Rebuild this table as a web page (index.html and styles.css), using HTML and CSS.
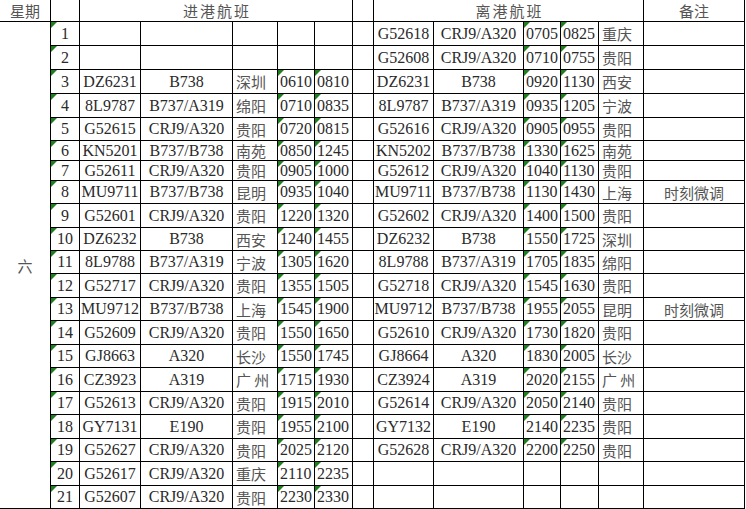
FILE: index.html
```html
<!DOCTYPE html>
<html lang="zh">
<head>
<meta charset="utf-8">
<title>航班时刻</title>
<link rel="stylesheet" href="styles.css">
</head>
<body>
<div class="sheet">
  <div class="cell c z">星期</div>
  <div class="cell"></div>
  <div class="cell c z span5 wide">进港航班</div>
  <div class="cell"></div>
  <div class="cell c z span5 wide">离港航班</div>
  <div class="cell c z">备注</div>

  <div class="cell c z day">六</div>

  <div class="cell n">1</div><div class="cell"></div><div class="cell"></div><div class="cell"></div><div class="cell"></div><div class="cell"></div><div class="cell"></div><div class="cell c">G52618</div><div class="cell c">CRJ9/A320</div><div class="cell t">0705</div><div class="cell t">0825</div><div class="cell l z">重庆</div><div class="cell"></div>
  <div class="cell n">2</div><div class="cell"></div><div class="cell"></div><div class="cell"></div><div class="cell"></div><div class="cell"></div><div class="cell"></div><div class="cell c">G52608</div><div class="cell c">CRJ9/A320</div><div class="cell t">0710</div><div class="cell t">0755</div><div class="cell l z">贵阳</div><div class="cell"></div>
  <div class="cell n">3</div><div class="cell c">DZ6231</div><div class="cell c">B738</div><div class="cell l z">深圳</div><div class="cell t">0610</div><div class="cell t">0810</div><div class="cell"></div><div class="cell c">DZ6231</div><div class="cell c">B738</div><div class="cell t">0920</div><div class="cell t">1130</div><div class="cell l z">西安</div><div class="cell"></div>
  <div class="cell n">4</div><div class="cell c">8L9787</div><div class="cell c">B737/A319</div><div class="cell l z">绵阳</div><div class="cell t">0710</div><div class="cell t">0835</div><div class="cell"></div><div class="cell c">8L9787</div><div class="cell c">B737/A319</div><div class="cell t">0935</div><div class="cell t">1205</div><div class="cell l z">宁波</div><div class="cell"></div>
  <div class="cell n">5</div><div class="cell c">G52615</div><div class="cell c">CRJ9/A320</div><div class="cell l z">贵阳</div><div class="cell t">0720</div><div class="cell t">0815</div><div class="cell"></div><div class="cell c">G52616</div><div class="cell c">CRJ9/A320</div><div class="cell t">0905</div><div class="cell t">0955</div><div class="cell l z">贵阳</div><div class="cell"></div>
  <div class="cell n">6</div><div class="cell c">KN5201</div><div class="cell c">B737/B738</div><div class="cell l z">南苑</div><div class="cell t">0850</div><div class="cell t">1245</div><div class="cell"></div><div class="cell c">KN5202</div><div class="cell c">B737/B738</div><div class="cell t">1330</div><div class="cell t">1625</div><div class="cell l z">南苑</div><div class="cell"></div>
  <div class="cell n">7</div><div class="cell c">G52611</div><div class="cell c">CRJ9/A320</div><div class="cell l z">贵阳</div><div class="cell t">0905</div><div class="cell t">1000</div><div class="cell"></div><div class="cell c">G52612</div><div class="cell c">CRJ9/A320</div><div class="cell t">1040</div><div class="cell t">1130</div><div class="cell l z">贵阳</div><div class="cell"></div>
  <div class="cell n">8</div><div class="cell c">MU9711</div><div class="cell c">B737/B738</div><div class="cell l z">昆明</div><div class="cell t">0935</div><div class="cell t">1040</div><div class="cell"></div><div class="cell c">MU9711</div><div class="cell c">B737/B738</div><div class="cell t">1130</div><div class="cell t">1430</div><div class="cell l z">上海</div><div class="cell c z">时刻微调</div>
  <div class="cell n">9</div><div class="cell c">G52601</div><div class="cell c">CRJ9/A320</div><div class="cell l z">贵阳</div><div class="cell t">1220</div><div class="cell t">1320</div><div class="cell"></div><div class="cell c">G52602</div><div class="cell c">CRJ9/A320</div><div class="cell t">1400</div><div class="cell t">1500</div><div class="cell l z">贵阳</div><div class="cell"></div>
  <div class="cell n">10</div><div class="cell c">DZ6232</div><div class="cell c">B738</div><div class="cell l z">西安</div><div class="cell t">1240</div><div class="cell t">1455</div><div class="cell"></div><div class="cell c">DZ6232</div><div class="cell c">B738</div><div class="cell t">1550</div><div class="cell t">1725</div><div class="cell l z">深圳</div><div class="cell"></div>
  <div class="cell n">11</div><div class="cell c">8L9788</div><div class="cell c">B737/A319</div><div class="cell l z">宁波</div><div class="cell t">1305</div><div class="cell t">1620</div><div class="cell"></div><div class="cell c">8L9788</div><div class="cell c">B737/A319</div><div class="cell t">1705</div><div class="cell t">1835</div><div class="cell l z">绵阳</div><div class="cell"></div>
  <div class="cell n">12</div><div class="cell c">G52717</div><div class="cell c">CRJ9/A320</div><div class="cell l z">贵阳</div><div class="cell t">1355</div><div class="cell t">1505</div><div class="cell"></div><div class="cell c">G52718</div><div class="cell c">CRJ9/A320</div><div class="cell t">1545</div><div class="cell t">1630</div><div class="cell l z">贵阳</div><div class="cell"></div>
  <div class="cell n">13</div><div class="cell c">MU9712</div><div class="cell c">B737/B738</div><div class="cell l z">上海</div><div class="cell t">1545</div><div class="cell t">1900</div><div class="cell"></div><div class="cell c">MU9712</div><div class="cell c">B737/B738</div><div class="cell t">1955</div><div class="cell t">2055</div><div class="cell l z">昆明</div><div class="cell c z">时刻微调</div>
  <div class="cell n">14</div><div class="cell c">G52609</div><div class="cell c">CRJ9/A320</div><div class="cell l z">贵阳</div><div class="cell t">1550</div><div class="cell t">1650</div><div class="cell"></div><div class="cell c">G52610</div><div class="cell c">CRJ9/A320</div><div class="cell t">1730</div><div class="cell t">1820</div><div class="cell l z">贵阳</div><div class="cell"></div>
  <div class="cell n">15</div><div class="cell c">GJ8663</div><div class="cell c">A320</div><div class="cell l z">长沙</div><div class="cell t">1550</div><div class="cell t">1745</div><div class="cell"></div><div class="cell c">GJ8664</div><div class="cell c">A320</div><div class="cell t">1830</div><div class="cell t">2005</div><div class="cell l z">长沙</div><div class="cell"></div>
  <div class="cell n">16</div><div class="cell c">CZ3923</div><div class="cell c">A319</div><div class="cell l z">广 州</div><div class="cell t">1715</div><div class="cell t">1930</div><div class="cell"></div><div class="cell c">CZ3924</div><div class="cell c">A319</div><div class="cell t">2020</div><div class="cell t">2155</div><div class="cell l z">广 州</div><div class="cell"></div>
  <div class="cell n">17</div><div class="cell c">G52613</div><div class="cell c">CRJ9/A320</div><div class="cell l z">贵阳</div><div class="cell t">1915</div><div class="cell t">2010</div><div class="cell"></div><div class="cell c">G52614</div><div class="cell c">CRJ9/A320</div><div class="cell t">2050</div><div class="cell t">2140</div><div class="cell l z">贵阳</div><div class="cell"></div>
  <div class="cell n">18</div><div class="cell c">GY7131</div><div class="cell c">E190</div><div class="cell l z">贵阳</div><div class="cell t">1955</div><div class="cell t">2100</div><div class="cell"></div><div class="cell c">GY7132</div><div class="cell c">E190</div><div class="cell t">2140</div><div class="cell t">2235</div><div class="cell l z">贵阳</div><div class="cell"></div>
  <div class="cell n">19</div><div class="cell c">G52627</div><div class="cell c">CRJ9/A320</div><div class="cell l z">贵阳</div><div class="cell t">2025</div><div class="cell t">2120</div><div class="cell"></div><div class="cell c">G52628</div><div class="cell c">CRJ9/A320</div><div class="cell t">2200</div><div class="cell t">2250</div><div class="cell l z">贵阳</div><div class="cell"></div>
  <div class="cell n">20</div><div class="cell c">G52617</div><div class="cell c">CRJ9/A320</div><div class="cell l z">重庆</div><div class="cell t">2110</div><div class="cell t">2235</div><div class="cell"></div><div class="cell"></div><div class="cell"></div><div class="cell"></div><div class="cell"></div><div class="cell"></div><div class="cell"></div>
  <div class="cell n">21</div><div class="cell c">G52607</div><div class="cell c">CRJ9/A320</div><div class="cell l z">贵阳</div><div class="cell t">2230</div><div class="cell t">2330</div><div class="cell"></div><div class="cell"></div><div class="cell"></div><div class="cell"></div><div class="cell"></div><div class="cell"></div><div class="cell"></div>
</div>
</body>
</html>
```
FILE: styles.css
```css
html, body {
  margin: 0;
  padding: 0;
  background: #ffffff;
}

.sheet {
  display: grid;
  grid-template-columns: 51px 29px 61px 92px 45px 37px 38px 21px 60px 90px 37px 38px 45px 101px;
  grid-template-rows: 22px 24px 24px 24px 24px 23px 20px 20px 23px 24px 23px 23px 24px 23px 24px 23px 24px 23px 24px 23px 24px 23px;
  width: 745px;
  font-family: "Liberation Serif", "Noto Sans CJK SC", serif;
  font-size: 16px;
  color: #2a2a2a;
}

.cell {
  box-sizing: border-box;
  border-right: 1px solid #000000;
  border-bottom: 1px solid #000000;
  display: flex;
  align-items: center;
  white-space: nowrap;
  overflow: hidden;
  position: relative;
  line-height: 1;
}

.c { justify-content: center; }
.l { justify-content: flex-start; padding-left: 3px; }
.z {
  font-family: "Noto Sans CJK SC", sans-serif;
  font-size: 15px;
  color: #555555;
}

.wide {
  letter-spacing: 2px;
  padding-left: 2px;
}

.span5 { grid-column: span 5; }
.day { grid-row: span 21; }

.n { justify-content: center; }
.t { justify-content: flex-start; padding-left: 2px; }

.n::before,
.t::before {
  content: "";
  position: absolute;
  left: 0;
  top: 0;
  width: 0;
  height: 0;
  border-top: 6px solid #1f7f1f;
  border-right: 6px solid transparent;
}
```
